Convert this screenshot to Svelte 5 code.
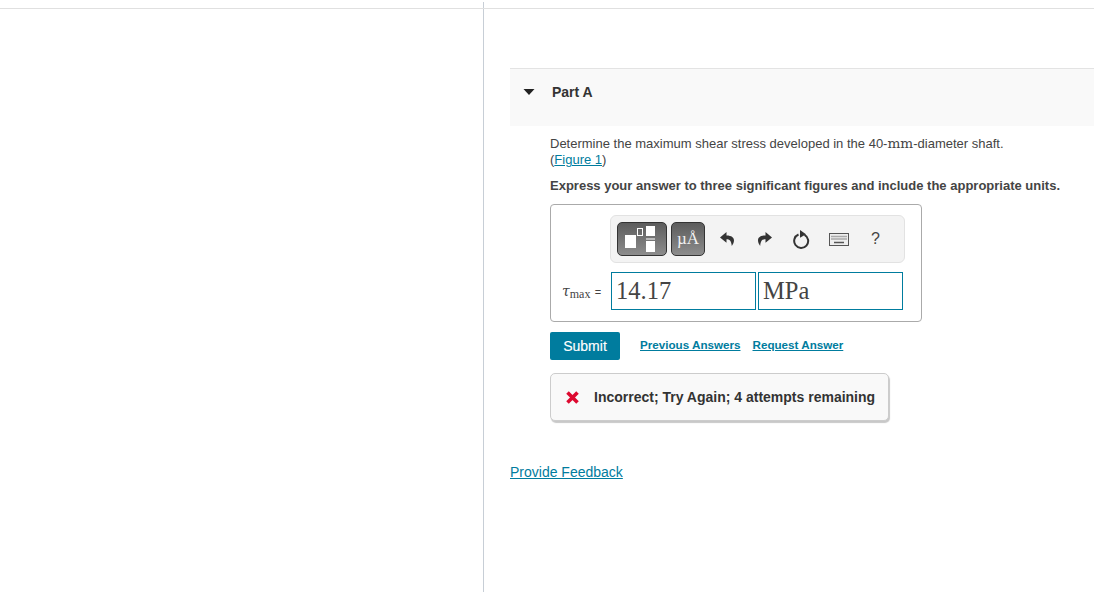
<script>
	const partTitle = 'Part A';
</script>

<div class="page">
	<div class="topline"></div>
	<aside class="left"></aside>
	<main class="right">
		<section class="part">
			<div class="part-head">
				<svg class="caret" width="12" height="6" viewBox="0 0 12 6"><path d="M0.5 0h11L6 6z" fill="#222" /></svg>
				<h2>{partTitle}</h2>
			</div>
			<div class="part-body">
				<p class="question">Determine the maximum shear stress developed in the 40-<span class="unit">mm</span>-diameter shaft.<br />(<a href="#fig">Figure 1</a>)</p>
				<p class="instr">Express your answer to three significant figures and include the appropriate units.</p>

				<div class="answer">
					<div class="toolbar">
						<button class="tplbtn tpl-a" aria-label="templates">
							<svg width="48" height="32" viewBox="0 0 48 32">
								<rect x="7" y="12" width="11" height="13" fill="#fff" />
								<rect x="19.500" y="5.500" width="5" height="7" fill="none" stroke="#fff" />
								<rect x="28" y="3" width="9" height="10" fill="#fff" />
								<rect x="28" y="15.500" width="9" height="1" fill="#fff" />
								<rect x="28" y="18" width="9" height="11" fill="#fff" />
							</svg>
						</button>
						<button class="tplbtn tpl-b">µÅ</button>
						<span class="tool">
							<svg width="15" height="15" viewBox="0 0 15 15"><path d="M6.500 0L0 5.500l6.500 5.200V7.200c3 0 4.800 1.300 5.300 6.800C15.500 9 15 3.500 6.500 3.500z" fill="#333" /></svg>
						</span>
						<span class="tool">
							<svg width="15" height="15" viewBox="0 0 15 15"><path d="M8.500 0L15 5.500l-6.500 5.200V7.200c-3 0-4.800 1.300-5.300 6.800C-.5 9 0 3.500 8.500 3.500z" fill="#333" /></svg>
						</span>
						<span class="tool">
							<svg width="17" height="19" viewBox="0 0 17 19"><path d="M5.500 4.500a7 7 0 1 0 6 .3" fill="none" stroke="#333" stroke-width="2" /><path d="M7 0l6 4.300-6 3.500z" fill="#333" /></svg>
						</span>
						<span class="tool">
							<svg width="20" height="13" viewBox="0 0 20 13">
								<rect x=".5" y=".5" width="19" height="12" fill="#eee" stroke="#555" />
								<path d="M2.500 3.500h15M2.500 6h15" stroke="#666" stroke-width="1.500" stroke-dasharray="1 1" />
								<path d="M5 9.500h10" stroke="#555" stroke-width="1.500" />
							</svg>
						</span>
						<span class="tool help">?</span>
					</div>
					<div class="inputs">
						<span class="label"><i>τ</i><sub>max</sub> <span class="eq">=</span></span>
						<div class="field">14.17</div>
						<div class="field">MPa</div>
					</div>
				</div>

				<div class="actions">
					<button class="submit">Submit</button>
					<a href="#prev">Previous Answers</a>
					<a href="#req">Request Answer</a>
				</div>

				<div class="feedback">
					<svg width="15" height="15" viewBox="0 0 15 15"><path d="M2.500 2.500l10 10M12.500 2.500l-10 10" stroke="#dd0a30" stroke-width="3.600" /></svg>
					<span>Incorrect; Try Again; 4 attempts remaining</span>
				</div>
			</div>
		</section>
		<a class="provide" href="#feedback">Provide Feedback</a>
	</main>
</div>

<style>
	:global(body) {
		background: #fff;
	}

	.page {
		position: relative;
		display: flex;
		height: 592px;
		overflow: hidden;
		font-family: 'Liberation Sans', Arial, sans-serif;
		color: #333;
	}

	.topline {
		position: absolute;
		top: 8px;
		left: 0;
		right: 0;
		height: 1px;
		background: #e0e0e0;
	}

	.left {
		width: 483px;
		margin-top: 2px;
		border-right: 1px solid #c7ced6;
		flex: none;
	}

	.right {
		flex: 1;
		padding: 68px 0 0 26px;
		min-width: 0;
	}

	.part-head {
		display: flex;
		align-items: center;
		height: 58px;
		padding: 0 0 11px 13px;
		box-sizing: border-box;
		border-top: 1px solid #e3e3e3;
		background: #f9f9f9;
	}

	.caret {
		margin-right: 17px;
	}

	h2 {
		margin: 0;
		font-size: 14px;
		font-weight: 700;
		color: #333;
	}

	.part-body {
		padding: 10px 0 0 40px;
	}

	p {
		margin: 0;
		font-size: 13px;
		line-height: 16px;
	}

	.question {
		color: #444;
	}

	.unit {
		font-family: 'DejaVu Serif', serif;
		font-size: 13.600px;
		line-height: 0;
	}

	a {
		color: #007c9e;
		text-decoration: underline;
	}

	.instr {
		margin-top: 10px;
		font-weight: 700;
		color: #444;
	}

	.answer {
		margin-top: 10px;
		width: 372px;
		height: 118px;
		box-sizing: border-box;
		border: 1px solid #aaa;
		border-radius: 4px;
		padding: 10px 16px 0 11px;
		display: flex;
		flex-direction: column;
		align-items: flex-end;
	}

	.toolbar {
		display: flex;
		align-items: center;
		width: 295px;
		height: 48px;
		box-sizing: border-box;
		padding-left: 6px;
		background: #f3f3f3;
		border: 1px solid #e2e2e2;
		border-radius: 6px;
	}

	.tplbtn {
		height: 34px;
		padding: 0;
		display: flex;
		align-items: center;
		justify-content: center;
		border: 1px solid #333;
		border-radius: 5px;
		background: linear-gradient(#5c5c5c, #8c8c8c);
		color: #f2f2f2;
		font-family: 'Liberation Serif', serif;
		font-size: 17px;
	}

	.tpl-a {
		width: 50px;
	}

	.tpl-b {
		width: 34px;
		margin-left: 4px;
		margin-right: 4px;
	}

	.tool {
		width: 37px;
		display: flex;
		justify-content: center;
		align-items: center;
	}

	.help {
		font-size: 16px;
		color: #444;
	}

	.inputs {
		display: flex;
		align-items: center;
		width: 100%;
		box-sizing: border-box;
		padding-right: 2px;
		margin-top: 9px;
		gap: 2px;
	}

	.label {
		flex: 1;
		font-family: 'Liberation Serif', serif;
		font-size: 13px;
		color: #444;
		white-space: nowrap;
	}

	.label i {
		font-family: 'DejaVu Serif', serif;
		font-size: 14px;
	}

	.label sub {
		font-size: 12px;
		vertical-align: -2px;
		line-height: 0;
	}

	.eq {
		font-family: 'Liberation Sans', sans-serif;
		font-size: 11px;
		margin-left: 1px;
	}

	.field {
		width: 145px;
		height: 38px;
		box-sizing: border-box;
		border: 1px solid #007c9e;
		padding-left: 4px;
		font-family: 'Liberation Serif', serif;
		font-size: 24.500px;
		line-height: 35px;
		color: #444;
	}

	.actions {
		display: flex;
		align-items: center;
		margin-top: 10px;
		font-size: 11.650px;
		font-weight: 700;
		height: 28px;
	}

	.actions a {
		padding-bottom: 3px;
	}

	.actions a + a {
		margin-left: 12px;
	}

	.submit {
		width: 70px;
		height: 28px;
		margin-right: 20px;
		background: #007c9e;
		color: #fff;
		border: none;
		border-radius: 2px;
		font: 400 14px 'Liberation Sans', sans-serif;
		-webkit-text-stroke: 0.150px #fff;
	}

	.feedback {
		margin-top: 13px;
		width: 339px;
		height: 48px;
		box-sizing: border-box;
		display: flex;
		align-items: center;
		padding-left: 14px;
		gap: 14px;
		background: #f9f9f9;
		border: 1px solid #ccc;
		border-radius: 5px;
		box-shadow: 1px 2px 1px #c8c8c8;
		font-weight: 700;
		color: #333;
	}

	.feedback span {
		font-size: 14px;
		white-space: nowrap;
	}

	.provide {
		display: inline-block;
		margin-top: 43px;
		font-size: 14px;
	}
</style>
